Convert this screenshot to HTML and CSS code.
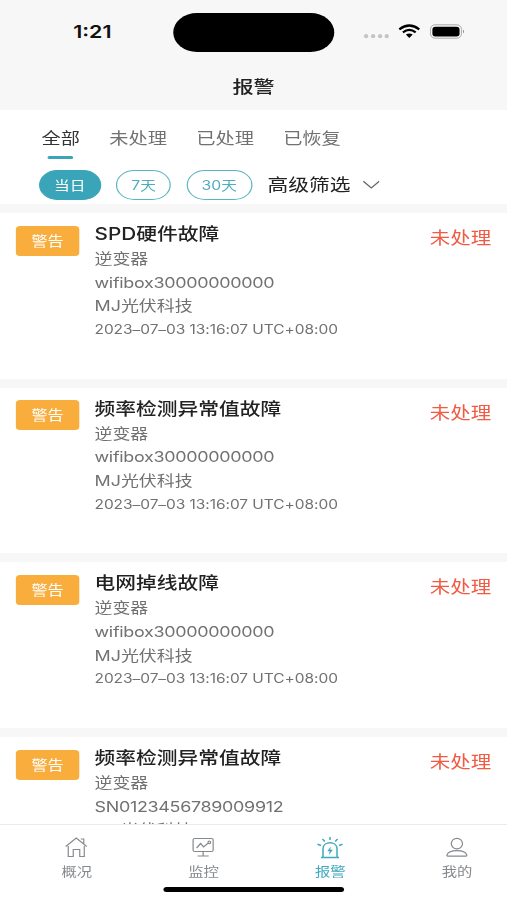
FILE: index.html
```html
<!DOCTYPE html>
<html lang="zh-CN">
<head>
<meta charset="utf-8">
<meta name="viewport" content="width=device-width">
<title>报警</title>
<link rel="stylesheet" href="styles.css">
</head>
<body>
<div class="screen">
  <header class="header">
    <div class="status">
      <span class="time">1:21</span>
      <span class="island"></span>
      <svg class="signals" viewBox="0 0 104 20" preserveAspectRatio="none">
        <g fill="#c4c4c4"><circle cx="5" cy="14.2" r="2.1"/><circle cx="12" cy="14.2" r="2.1"/><circle cx="19" cy="14.2" r="2.1"/><circle cx="25.600" cy="14.200" r="2.1"/></g>
        <g fill="none" stroke="#000" stroke-width="2.3"><path d="M38.200 7.300Q48.200 -.3 58.200 7.300"/><path d="M41.800 10.400Q48.200 5.400 54.600 10.400"/></g>
        <path d="M44.800 12.600Q48.200 10.200 51.600 12.600L48.200 15.900Z"/>
        <rect x="69.400" y="2.800" width="31" height="13.400" rx="4.500" fill="none" stroke="#aaa" stroke-width="1"/>
        <rect x="71.300" y="4.800" width="27.200" height="9.600" rx="3"/>
        <path d="M102 7.500Q104 9.500 102 11.500Z" fill="#888"/>
      </svg>
    </div>
    <h1 class="page-title">报警</h1>
  </header>
  <section class="filters">
    <nav class="tabs">
      <span class="tab active">全部</span><span class="tab">未处理</span><span class="tab">已处理</span><span class="tab">已恢复</span>
    </nav>
    <div class="ranges">
      <span class="pill selected">当日</span><span class="pill week">7天</span><span class="pill month">30天</span>
      <span class="advanced">高级筛选</span>
      <svg class="chevron" viewBox="0 0 18 10" preserveAspectRatio="none"><path d="M1 1.200L9 8L17 1.200" fill="none" stroke="#666" stroke-width="1.300"/></svg>
    </div>
  </section>
  <main class="list">
    <article class="card">
      <span class="tag">警告</span>
      <div class="info"><h2>SPD硬件故障</h2><p>逆变器</p><p class="serial">wifibox30000000000</p><p>MJ光伏科技</p><p class="date">2023–07–03 13:16:07 UTC+08:00</p></div>
      <span class="state">未处理</span>
    </article>
    <article class="card">
      <span class="tag">警告</span>
      <div class="info"><h2>频率检测异常值故障</h2><p>逆变器</p><p class="serial">wifibox30000000000</p><p>MJ光伏科技</p><p class="date">2023–07–03 13:16:07 UTC+08:00</p></div>
      <span class="state">未处理</span>
    </article>
    <article class="card">
      <span class="tag">警告</span>
      <div class="info"><h2>电网掉线故障</h2><p>逆变器</p><p class="serial">wifibox30000000000</p><p>MJ光伏科技</p><p class="date">2023–07–03 13:16:07 UTC+08:00</p></div>
      <span class="state">未处理</span>
    </article>
    <article class="card">
      <span class="tag">警告</span>
      <div class="info"><h2>频率检测异常值故障</h2><p>逆变器</p><p class="serial">SN0123456789009912</p><p>MJ光伏科技</p></div>
      <span class="state">未处理</span>
    </article>
  </main>
  <footer class="bottom">
    <nav class="tabbar">
      <span class="item"><svg viewBox="0 0 28 24" preserveAspectRatio="none"><path d="M3.500 10.500L14 2L24.500 10.500M6 10V20.500H11V13.500H17.500V20.500H22V10M18.500 3H21.500V7.500"/></svg>概况</span>
      <span class="item"><svg viewBox="0 0 28 24" preserveAspectRatio="none"><rect x="4" y="2.500" width="20" height="13" rx="1.500"/><path d="M14 15.500V19.500M8.500 20H19.500M7.500 12L11.500 7.500L14.500 11L19.200 7"/><circle cx="20.200" cy="6.300" r="1.300"/></svg>监控</span>
      <span class="item current"><svg viewBox="0 0 28 24" preserveAspectRatio="none"><path d="M5 21.500H23M7 21.500V12.800C7 4.800 21 4.800 21 12.800V21.500M14 1V4M6.500 3L8.800 5.600M21.500 3L19.200 5.600M1.500 8.300L5 9.500M26.500 8.300L23 9.500"/><path class="bolt" d="M14.800 10.500L11.300 15.200H13.700L13 19L16.800 13.800H14.200Z"/></svg>报警</span>
      <span class="item"><svg viewBox="0 0 28 24" preserveAspectRatio="none"><ellipse cx="14" cy="7.600" rx="5.600" ry="5.300"/><path d="M5 20.200C4 20.200 4 19.500 4.200 18.800C6.200 13.300 21.800 13.300 23.800 18.800C24 19.500 24 20.200 23 20.200Z"/></svg>我的</span>
    </nav>
    <div class="home-bar"></div>
  </footer>
</div>
</body>
</html>
```

FILE: styles.css
```css
* { box-sizing: border-box; }
html, body { margin: 0; height: 900px; overflow: hidden; background: #fff; }
h1, h2, p { margin: 0; font-weight: 400; }

/* The layout is drawn narrow and widened horizontally to fill the window. */
.screen {
  width: 415.57px;
  height: 900px;
  display: flex;
  flex-direction: column;
  overflow: hidden;
  transform: scaleX(1.22);
  transform-origin: 0 0;
  font-family: Inter, "Noto Sans CJK SC", sans-serif;
  color: #717171;
  white-space: nowrap;
}

.header { height: 110px; flex: none; background: #f7f7f7; }
.status { height: 64px; display: flex; align-items: center; }
.time { width: 142.2px; padding-left: 60px; font-size: 17.6px; font-weight: 600; color: #111; line-height: 20px; }
.island { width: 132px; height: 39px; border-radius: 19.5px; background: #000; }
.signals { width: 85.2px; height: 20px; margin-left: 22.2px; margin-top: 0; }
.page-title { text-align: center; font-size: 17.3px; font-weight: 500; line-height: 46px; color: #222; }

.filters { height: 94px; flex: none; padding: 16px 0 0 31.6px; }
.tabs { display: flex; gap: 24px; padding-left: 2.5px; height: 44px; }
.tab { font-size: 15.75px; line-height: 25px; }
.active { color: #333; display: flex; flex-direction: column; align-items: center; }
.active::after { content: ""; width: 21px; height: 3px; margin-top: 5px; border-radius: 1.5px; background: #3aa5b8; }
.ranges { display: flex; align-items: center; height: 30px; }
.pill { height: 30px; width: 51.2px; margin-right: 12.4px; border: 1.3px solid #5bb4c4; border-radius: 15px; font-size: 12.9px; line-height: 30px; text-align: center; color: #50adbd; }
.week { width: 45.1px; }
.month { width: 54.2px; }
.selected { background: #3aa5b8; border-color: #3aa5b8; color: #fff; }
.advanced { font-size: 17px; line-height: 24px; margin-top: -1px; color: #222; }
.chevron { width: 14.7px; height: 10px; margin-left: 9.5px; }

.list { flex: 1; min-height: 0; overflow: hidden; background: #f7f7f7; padding-top: 9px; display: flex; flex-direction: column; gap: 9.2px; }
.card { height: 165.5px; flex: none; display: flex; align-items: flex-start; background: #fff; padding: 9px 13px 0 13.4px; }
.tag { width: 51.2px; height: 30px; margin-top: 3.6px; border-radius: 3.5px; background: #f8ad3d; color: #fff; font-size: 13.2px; line-height: 31px; text-align: center; }
.info { flex: 1; margin-left: 12.9px; font-size: 14.7px; line-height: 23.7px; }
.info h2 { font-size: 17px; font-weight: 500; line-height: 24px; margin-bottom: 1.9px; color: #222; }
.info .serial { letter-spacing: -0.25px; }
.info .date { font-size: 12.7px; line-height: 22px; letter-spacing: -0.04px; }
.state { margin-top: 4px; font-size: 16.8px; line-height: 25px; color: #f15a43; }

.bottom { height: 76.5px; flex: none; border-top: 1px solid #ebebeb; background: #fff; display: flex; flex-direction: column; align-items: center; }
.tabbar { width: 100%; display: flex; height: 62px; padding-top: 11px; transform: translateX(11px); }
.item { flex: 1; display: flex; flex-direction: column; align-items: center; font-size: 12.6px; line-height: 18px; color: #858a8e; }
.item svg { width: 23px; height: 24px; margin-bottom: 3px; fill: none; stroke: #858a8e; stroke-width: 1.2; }
.current { color: #3fa9bd; }
.current svg { stroke: #3fa9bd; stroke-width: 1.5; }
.item .bolt { fill: #3fa9bd; stroke: none; }
.home-bar { width: 148px; height: 5px; border-radius: 2.5px; background: #000; margin-top: 0; }
```
